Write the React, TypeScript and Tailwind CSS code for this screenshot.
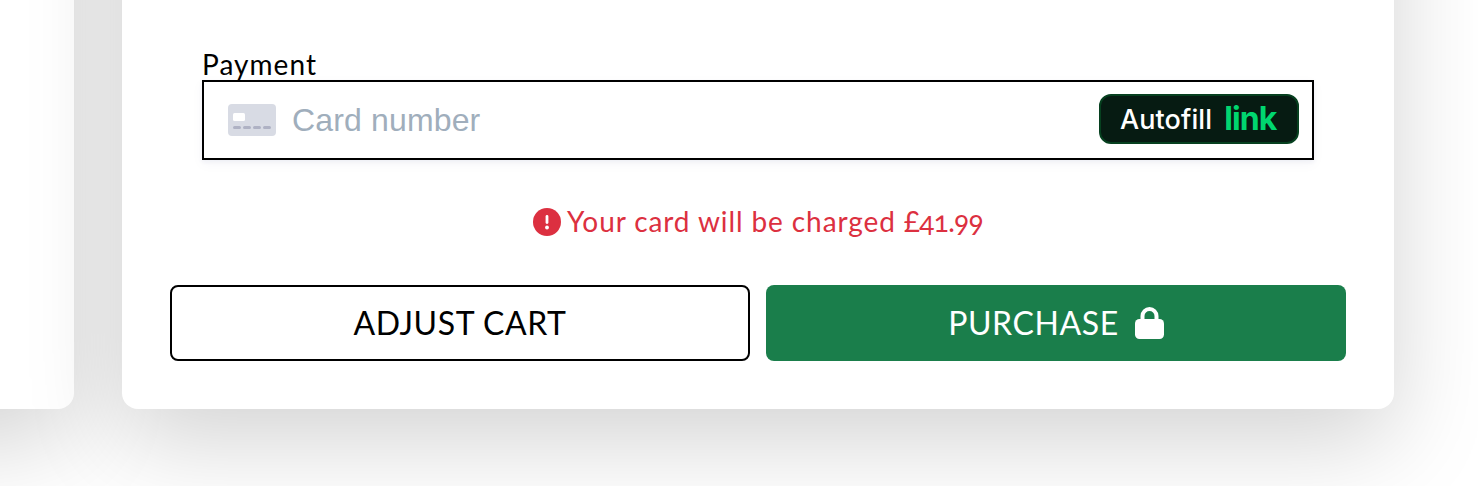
function CardIcon() {
  return (
    <svg width="48" height="32" viewBox="0 0 48 32" aria-hidden="true">
      <rect width="48" height="32" rx="4" fill="#d8dbe4" />
      <rect x="5" y="9" width="12" height="8" rx="1.5" fill="#fff" />
      <path d="M6.500 23.500h5M16.500 23.500h5M26.500 23.500h5M36.500 23.500h5" stroke="#afb2c4" strokeWidth="3" strokeLinecap="round" />
    </svg>
  );
}

function AlertIcon() {
  return (
    <svg width="28" height="28" viewBox="0 0 28 28" aria-hidden="true">
      <circle cx="14" cy="14" r="14" fill="currentColor" />
      <path d="M14 8.500v6" stroke="#fff" strokeWidth="2.800" strokeLinecap="round" />
      <circle cx="14" cy="19.500" r="1.900" fill="#fff" />
    </svg>
  );
}

function LockIcon() {
  return (
    <svg width="29" height="32" viewBox="0 0 29 32" aria-hidden="true">
      <rect y="12" width="29" height="20" rx="4.500" fill="currentColor" />
      <path d="M7.500 14V9a7 7 0 0 1 14 0v5" fill="none" stroke="currentColor" strokeWidth="4" />
    </svg>
  );
}

export default function App() {
  return (
    <main className="h-[486px] w-[1478px] overflow-hidden bg-white font-['Lato',sans-serif] text-black">
      <div className="-mt-[400px] -ml-[1198px] flex w-[2592px] gap-12">
        <section className="h-[809px] w-[1272px] shrink-0 rounded-2xl bg-white shadow-[0_32px_96px_rgba(0,0,0,0.175)]" />
        <section className="flex h-[809px] w-[1272px] shrink-0 flex-col rounded-2xl bg-white px-12 pt-[448px] shadow-[0_32px_96px_rgba(0,0,0,0.175)]">
          <div className="px-8">
            <label className="block h-8 text-[28px] leading-[33px] tracking-[1.05px]">Payment</label>
            <div className="flex h-20 items-center border-2 border-black bg-white pr-[13px] pl-6 shadow-[0_2px_4px_rgba(50,60,130,0.06),0_4px_12px_rgba(50,60,130,0.04)]">
              <CardIcon />
              <span className="ml-4 font-['Liberation_Sans',sans-serif] text-[32px] leading-10 tracking-[0.15px] text-[#a0aebc]">Card number</span>
              <button className="mb-0.5 ml-auto flex h-[50px] w-[200px] items-center rounded-xl border-2 border-[#06401f] bg-[#061b12] pl-[19px] font-['Inter',sans-serif] text-white">
                <span className="pt-0.5 text-[27px] font-medium leading-8 tracking-[0.1px]">Autofill</span>
                <span className="ml-3 text-[32px] font-bold leading-8 tracking-[-0.9px] text-[#00d66f]">link</span>
              </button>
            </div>
          </div>
          <p className="mt-10 flex h-11 items-center justify-center gap-1.5 text-[28px] leading-[42px] text-[#dc3040]">
            <AlertIcon />
            <span className="whitespace-pre pb-0.5 tracking-[0.9px]">
              Your card will be charged <span className="tracking-[-0.7px]">£<span className="oldstyle-nums">41.99</span></span>
            </span>
          </p>
          <div className="mt-[41px] grid grid-cols-2 gap-4 text-[32px] tracking-[0.6px]">
            <button className="h-[76px] rounded-lg border-2 border-black">ADJUST CART</button>
            <button className="flex h-[76px] items-center justify-center gap-4 rounded-lg bg-[#1a7e4b] text-white">
              PURCHASE
              <LockIcon />
            </button>
          </div>
        </section>
      </div>
    </main>
  );
}
